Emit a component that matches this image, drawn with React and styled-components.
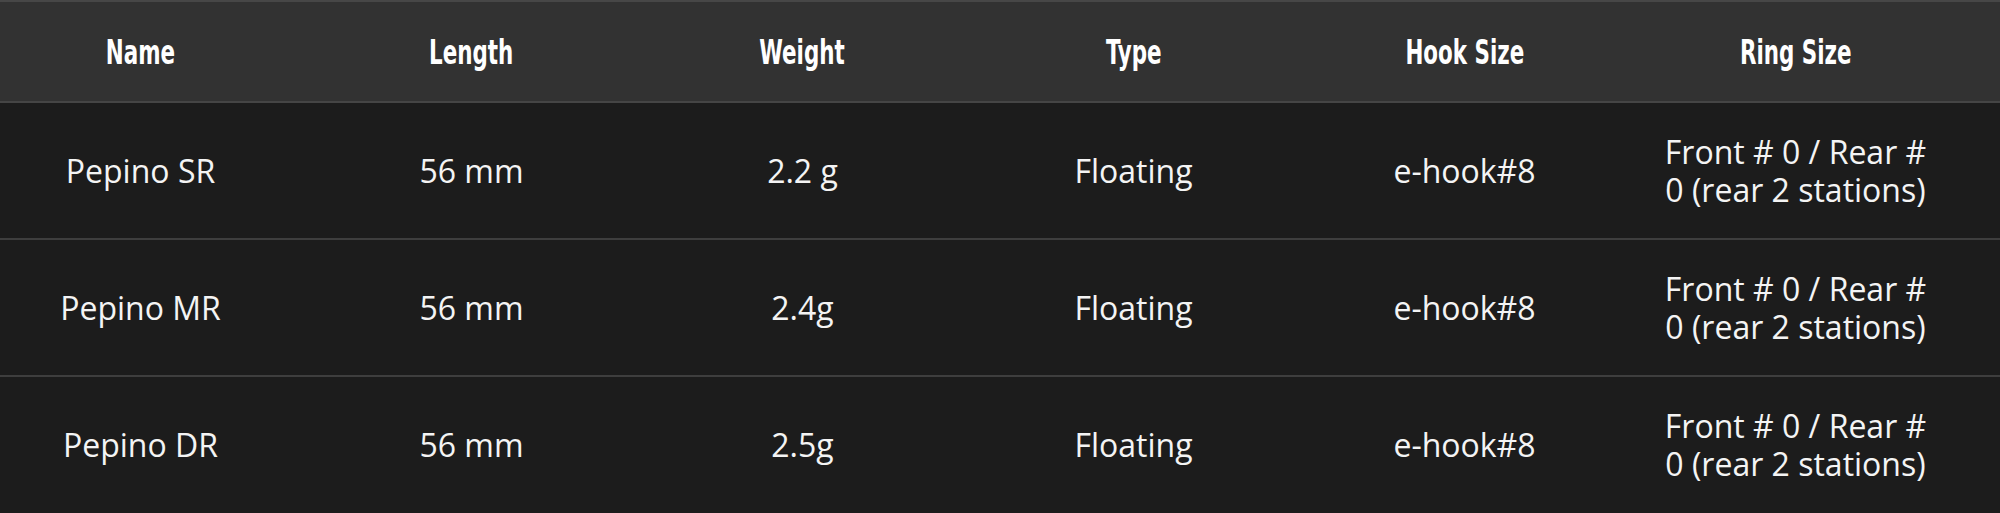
import styled, { createGlobalStyle } from 'styled-components';

const GlobalStyle = createGlobalStyle`
    html, body {
        margin: 0;
        padding: 0;
        background: #1c1c1c;
        overflow: hidden;
    }
    `

const Table = styled.div`
    width: 2000px;
    background-color: #1c1c1c;
    overflow: hidden;
    `

const HeadRow = styled.div`
    display: grid;
    grid-template-columns: repeat(6, 331px);
    margin-left: -25px;
    width: 2025px;
    height: 99px;
    align-items: center;
    background-color: #323232;
    border-top: 2px solid #474747;
    border-bottom: 2px solid #454545;
    `

const HeadCell = styled.div`
    text-align: center;
    `

// condensed heading face: no narrow font installed, so squeeze a bold one
const HeadLabel = styled.span`
    display: inline-block;
    transform: scaleX(0.7);
    color: #ffffff;
    font-family: "DejaVu Sans Condensed", "DejaVu Sans", sans-serif;
    font-weight: bold;
    font-size: 34px;
    line-height: 1;
    white-space: nowrap;
    `

const Row = styled.div`
    display: grid;
    grid-template-columns: repeat(6, 331px);
    margin-left: -25px;
    width: 2025px;
    height: ${props => props.last ? '136px' : '135px'};
    align-items: center;
    background-color: #1c1c1c;
    border-bottom: ${props => props.last ? 'none' : '2px solid #3e3e3e'};
    `

const Cell = styled.div`
    text-align: center;
    padding: 0 32px;
    color: #f4f4f4;
    font-family: "Open Sans", "Noto Sans", sans-serif;
    font-size: 32px;
    line-height: 38px;
    `

const columns = ['Name', 'Length', 'Weight', 'Type', 'Hook Size', 'Ring Size']

const lures = [
    { name: 'Pepino SR', length: '56 mm', weight: '2.2 g', type: 'Floating', hook: 'e-hook#8', ring: 'Front # 0 / Rear # 0 (rear 2 stations)' },
    { name: 'Pepino MR', length: '56 mm', weight: '2.4g', type: 'Floating', hook: 'e-hook#8', ring: 'Front # 0 / Rear # 0 (rear 2 stations)' },
    { name: 'Pepino DR', length: '56 mm', weight: '2.5g', type: 'Floating', hook: 'e-hook#8', ring: 'Front # 0 / Rear # 0 (rear 2 stations)' },
]

export default function App() {
    return (
        <>
            <GlobalStyle />
            <Table>
                <HeadRow>
                    {columns.map(c => (
                        <HeadCell key={c}><HeadLabel>{c}</HeadLabel></HeadCell>
                    ))}
                </HeadRow>
                {lures.map((l, i) => (
                    <Row key={l.name} last={i === lures.length - 1}>
                        <Cell>{l.name}</Cell>
                        <Cell>{l.length}</Cell>
                        <Cell>{l.weight}</Cell>
                        <Cell>{l.type}</Cell>
                        <Cell>{l.hook}</Cell>
                        <Cell>{l.ring}</Cell>
                    </Row>
                ))}
            </Table>
        </>
    )
}
